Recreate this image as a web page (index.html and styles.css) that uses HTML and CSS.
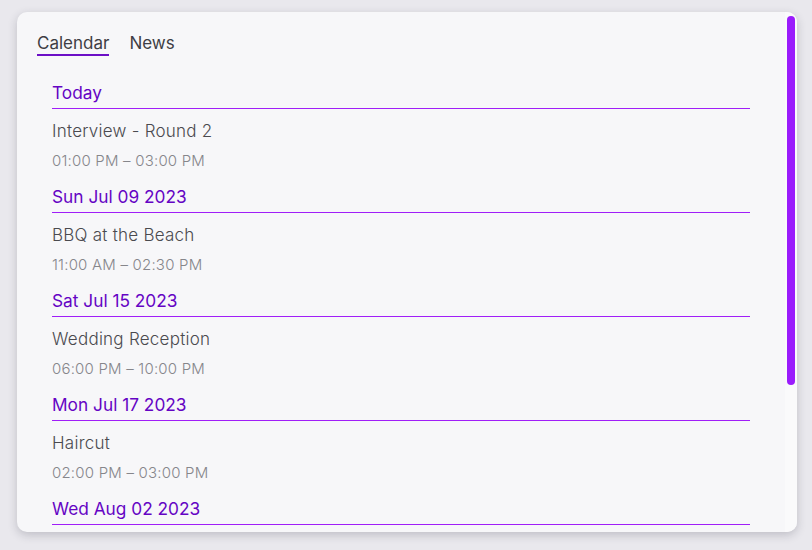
FILE: index.html
```html
<!DOCTYPE html>
<html lang="en">
<head>
<meta charset="utf-8">
<title>Calendar</title>
<link rel="stylesheet" href="styles.css">
</head>
<body>
<div class="card">
  <div class="content">
    <nav class="tabs">
      <span class="tab active">Calendar</span>
      <span class="tab">News</span>
    </nav>
    <div class="list">
      <section class="day">
        <h2 class="day-title">Today</h2>
        <div class="event-title">Interview - Round 2</div>
        <div class="event-time">01:00 PM – 03:00 PM</div>
      </section>
      <section class="day">
        <h2 class="day-title">Sun Jul 09 2023</h2>
        <div class="event-title">BBQ at the Beach</div>
        <div class="event-time">11:00 AM – 02:30 PM</div>
      </section>
      <section class="day">
        <h2 class="day-title">Sat Jul 15 2023</h2>
        <div class="event-title">Wedding Reception</div>
        <div class="event-time">06:00 PM – 10:00 PM</div>
      </section>
      <section class="day">
        <h2 class="day-title">Mon Jul 17 2023</h2>
        <div class="event-title">Haircut</div>
        <div class="event-time">02:00 PM – 03:00 PM</div>
      </section>
      <section class="day">
        <h2 class="day-title">Wed Aug 02 2023</h2>
      </section>
    </div>
  </div>
  <div class="scrollbar"><div class="thumb"></div></div>
</div>
</body>
</html>
```
FILE: styles.css
```css
html, body {
  margin: 0;
  padding: 0;
}
body {
  background: #e9e8ed;
  font-family: Inter, "Open Sans", "Liberation Sans", sans-serif;
  width: 812px;
  height: 550px;
  overflow: hidden;
}
.card {
  box-sizing: border-box;
  margin: 12px 0 0 17px;
  width: 780px;
  height: 520px;
  background: #f7f7f9;
  border-radius: 10px;
  box-shadow: 0 3px 10px rgba(40, 40, 60, 0.22);
  overflow: hidden;
  display: flex;
}
.content {
  flex: 1;
  min-width: 0;
}
.scrollbar {
  width: 12px;
  box-sizing: border-box;
  padding: 4px 2px;
  background: #fafafb;
}
.thumb {
  height: 369px;
  background: #9a1cfc;
  border-radius: 4px;
}
.tabs {
  display: flex;
  gap: 20px;
  padding: 20px 20px 0 20px;
}
.tab {
  font-size: 17px;
  line-height: 22px;
  color: #3e3e44;
  border-bottom: 2px solid transparent;
}
.tab.active {
  border-bottom-color: #6c0fc6;
}
.list {
  padding: 25px 35px 0 35px;
}
.day-title {
  margin: 0;
  font-size: 17.3px;
  font-weight: 400;
  line-height: 24px;
  color: #6504c4;
  padding-bottom: 3px;
  border-bottom: 1px solid #a01ef8;
}
.event-title {
  margin-top: 10px;
  font-size: 17px;
  font-weight: 300;
  letter-spacing: 0.25px;
  line-height: 24px;
  color: #4a4a4f;
}
.event-time {
  margin-top: 6px;
  margin-bottom: 12px;
  font-size: 15px;
  font-weight: 300;
  letter-spacing: 0.2px;
  line-height: 24px;
  color: #86868b;
}
```
